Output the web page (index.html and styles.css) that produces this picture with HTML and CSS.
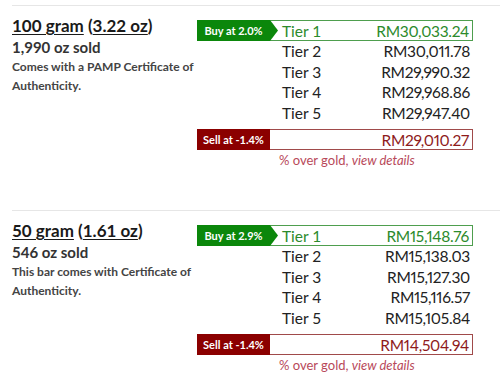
FILE: index.html
```html
<!DOCTYPE html>
<html>
<head>
<meta charset="utf-8">
<link rel="stylesheet" href="styles.css">
</head>
<body>
<div class="list">
  <section class="product">
    <div class="info">
      <h2 class="title"><span class="u">100 gram</span> (<span class="u">3.22 oz</span>)</h2>
      <div class="sold">1,990 oz sold</div>
      <p class="desc">Comes with a PAMP Certificate of Authenticity.</p>
    </div>
    <div class="prices">
      <div class="row buy">
        <div class="badge buy-badge">Buy at 2.0%</div>
        <span class="tier">Tier 1</span><span class="amt">RM30,033.24</span>
      </div>
      <div class="row"><span class="tier">Tier 2</span><span class="amt">RM30,011.78</span></div>
      <div class="row"><span class="tier">Tier 3</span><span class="amt">RM29,990.32</span></div>
      <div class="row"><span class="tier">Tier 4</span><span class="amt">RM29,968.86</span></div>
      <div class="row"><span class="tier">Tier 5</span><span class="amt">RM29,947.40</span></div>
      <div class="row sell">
        <div class="badge sell-badge">Sell at -1.4%</div>
        <span class="amt">RM29,010.27</span>
      </div>
      <p class="note">% over gold, <a class="details">view details</a></p>
    </div>
  </section>
  <section class="product">
    <div class="info">
      <h2 class="title"><span class="u">50 gram</span> (<span class="u">1.61 oz</span>)</h2>
      <div class="sold">546 oz sold</div>
      <p class="desc">This bar comes with Certificate of Authenticity.</p>
    </div>
    <div class="prices">
      <div class="row buy">
        <div class="badge buy-badge">Buy at 2.9%</div>
        <span class="tier">Tier 1</span><span class="amt">RM15,148.76</span>
      </div>
      <div class="row"><span class="tier">Tier 2</span><span class="amt">RM15,138.03</span></div>
      <div class="row"><span class="tier">Tier 3</span><span class="amt">RM15,127.30</span></div>
      <div class="row"><span class="tier">Tier 4</span><span class="amt">RM15,116.57</span></div>
      <div class="row"><span class="tier">Tier 5</span><span class="amt">RM15,105.84</span></div>
      <div class="row sell">
        <div class="badge sell-badge">Sell at -1.4%</div>
        <span class="amt">RM14,504.94</span>
      </div>
      <p class="note">% over gold, <a class="details">view details</a></p>
    </div>
  </section>
</div>
</body>
</html>
```
FILE: styles.css
```css
html, body {
  margin: 0;
  padding: 0;
  background: #fff;
}
body {
  font-family: Lato, "Open Sans", sans-serif;
  color: #222;
}
.list {
  padding-top: 5px;
  padding-left: 12px;
}
.product {
  display: flex;
  border-top: 1px solid #e6e6e6;
  padding-top: 14px;
  height: 190px;
}
.info {
  width: 185px;
  flex: none;
}
.title {
  margin: -5px 0 0;
  font-size: 17px;
  font-weight: 700;
  line-height: 22px;
  color: #1a1a1a;
}
.title .u {
  text-decoration: underline;
  text-underline-offset: 2px;
}
.sold {
  font-size: 15px;
  font-weight: 700;
  color: #333;
  line-height: 20px;
}
.desc {
  margin: 0;
  font-size: 12px;
  font-weight: 700;
  color: #444;
  line-height: 19px;
}
.prices {
  width: 276px;
  flex: none;
}
.row {
  box-sizing: border-box;
  display: flex;
  align-items: center;
  height: 20.5px;
  padding-left: 85px;
  padding-right: 3px;
  font-size: 15.5px;
}
.amt {
  margin-left: auto;
  font-variant-numeric: proportional-nums;
  letter-spacing: -0.3px;
}
.row.buy {
  border: 1px solid #4e9e4e;
  padding-left: 0;
  color: #2c8a2c;
  height: 21px;
}
.badge {
  align-self: stretch;
  margin: -1px 0 -1px -1px;
  display: flex;
  align-items: center;
  justify-content: center;
  font-size: 11px;
  font-weight: 700;
  color: #fff;
  letter-spacing: 0;
}
.buy-badge {
  width: 81px;
  padding-right: 8px;
  box-sizing: border-box;
  background: #0b870b;
  clip-path: polygon(0 0, 73px 0, 81px 50%, 73px 100%, 0 100%);
}
.buy .tier {
  margin-left: 4px;
}
.row.sell {
  margin-top: 6px;
  border: 1px solid #a04a4a;
  padding-left: 0;
  height: 21px;
  color: #8e1b1b;
}
.sell-badge {
  width: 73px;
  background: #8b0000;
}
.note {
  margin: 2px 0 0;
  padding-left: 82px;
  font-size: 13px;
  color: #b8495a;
}
.details {
  font-style: italic;
}
```
